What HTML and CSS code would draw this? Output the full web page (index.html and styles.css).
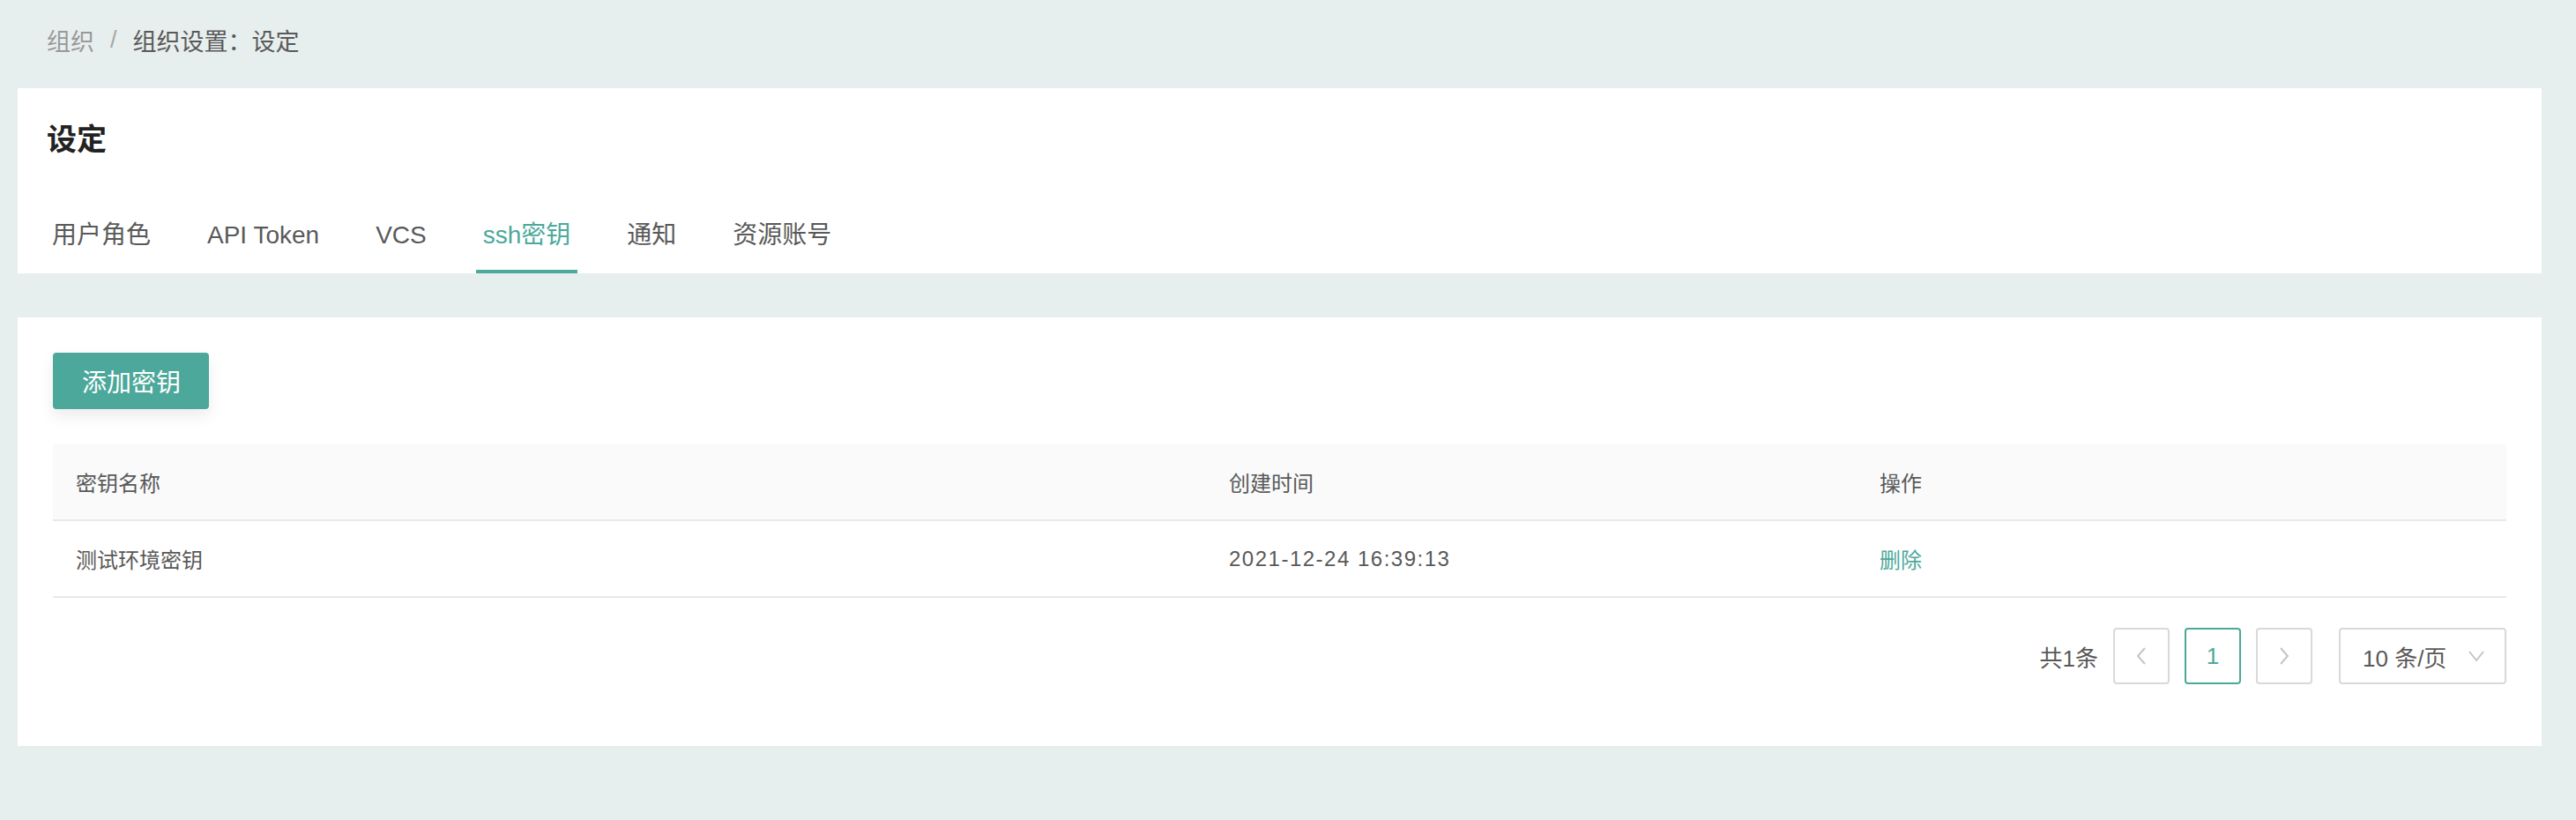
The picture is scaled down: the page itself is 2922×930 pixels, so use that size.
FILE: index.html
```html
<!DOCTYPE html>
<html lang="zh-CN">
<head>
<meta charset="utf-8">
<title>组织设置：设定</title>
<link rel="stylesheet" href="styles.css">
</head>
<body>
<div class="page">
  <nav class="breadcrumb">
    <span class="crumb-link">组织</span>
    <span class="crumb-sep">/</span>
    <span class="crumb-current">组织设置：设定</span>
  </nav>

  <section class="card header-card">
    <h1 class="title">设定</h1>
    <div class="tabs">
      <div class="tab">用户角色</div>
      <div class="tab">API Token</div>
      <div class="tab">VCS</div>
      <div class="tab active">ssh密钥</div>
      <div class="tab">通知</div>
      <div class="tab">资源账号</div>
    </div>
  </section>

  <section class="card body-card">
    <div class="toolbar">
      <button class="btn-primary">添加密钥</button>
    </div>
    <div class="table">
      <div class="tr thead">
        <div class="td">密钥名称</div>
        <div class="td">创建时间</div>
        <div class="td">操作</div>
      </div>
      <div class="tr">
        <div class="td">测试环境密钥</div>
        <div class="td date">2021-12-24 16:39:13</div>
        <div class="td"><span class="link">删除</span></div>
      </div>
    </div>
    <div class="pagination">
      <span class="total">共1条</span>
      <div class="pg-box">
        <svg width="14" height="24" viewBox="0 0 14 24"><polyline points="11,3 3,12 11,21" fill="none" stroke="#c4c4c4" stroke-width="2"/></svg>
      </div>
      <div class="pg-box active">1</div>
      <div class="pg-box">
        <svg width="14" height="24" viewBox="0 0 14 24"><polyline points="3,3 11,12 3,21" fill="none" stroke="#c4c4c4" stroke-width="2"/></svg>
      </div>
      <div class="pg-select">
        <span>10 条/页</span>
        <svg width="20" height="14" viewBox="0 0 20 14"><polyline points="2,2 10,12 18,2" fill="none" stroke="#c4c4c4" stroke-width="2"/></svg>
      </div>
    </div>
  </section>
</div>
</body>
</html>
```

FILE: styles.css
```css
html, body {
  margin: 0;
  padding: 0;
}
body {
  background: #e7efee;
  font-family: "Liberation Sans", "Noto Sans CJK SC", sans-serif;
  color: #595959;
  width: 2922px;
  height: 930px;
  overflow: hidden;
}
.page {
  padding: 0 39px 0 20px;
}
.breadcrumb {
  height: 90px;
  margin-bottom: 10px;
  display: flex;
  align-items: center;
  padding-left: 33px;
  font-size: 27px;
}
.crumb-link {
  color: #999;
}
.crumb-sep {
  color: #a6a6a6;
  margin: 0 18px;
}
.crumb-current {
  color: #595959;
}
.card {
  background: #fff;
}
.header-card {
  padding: 34px 33px 0;
}
.title {
  margin: 0;
  font-size: 34px;
  line-height: 48px;
  font-weight: bold;
  color: #222;
}
.tabs {
  display: flex;
  gap: 48px;
  margin-top: 65px;
  margin-left: -2px;
}
.tab {
  font-size: 28px;
  line-height: 40px;
  padding: 0 8px 19px;
  border-bottom: 4px solid transparent;
  color: #595959;
}
.tab.active {
  color: #4ca99b;
  border-bottom-color: #4ca99b;
}
.body-card {
  margin-top: 50px;
  padding: 40px 40px 40px;
}
.toolbar {
  display: flex;
}
.btn-primary {
  height: 64px;
  padding: 0 32px 0 33px;
  background: #4ca89a;
  color: #fff;
  border: none;
  border-radius: 4px;
  font-family: inherit;
  font-size: 28px;
  box-shadow: 0 8px 18px rgba(0, 0, 0, 0.08);
}
.table {
  margin-top: 40px;
  font-size: 24px;
}
.tr {
  display: grid;
  grid-template-columns: 1308px 738px 1fr;
  height: 85px;
  border-bottom: 2px solid #e9e9e9;
  align-items: center;
}
.thead {
  background: #fafafa;
}
.td {
  padding-left: 26px;
}
.date {
  letter-spacing: 1.5px;
}
.link {
  color: #4ca99b;
}
.pagination {
  display: flex;
  justify-content: flex-end;
  align-items: center;
  gap: 17px;
  margin-top: 34px;
  margin-bottom: 30px;
  font-size: 26px;
}
.pg-box {
  width: 60px;
  height: 60px;
  border: 2px solid #d9d9d9;
  border-radius: 4px;
  display: flex;
  align-items: center;
  justify-content: center;
  color: #595959;
}
.pg-box.active {
  border-color: #4ca89a;
  color: #4ca99b;
}
.pg-select {
  margin-left: 13px;
  height: 60px;
  border: 2px solid #d9d9d9;
  border-radius: 4px;
  display: flex;
  align-items: center;
  justify-content: space-between;
  padding: 0 22px 0 25px;
  box-sizing: content-box;
  width: 139px;
}
```
